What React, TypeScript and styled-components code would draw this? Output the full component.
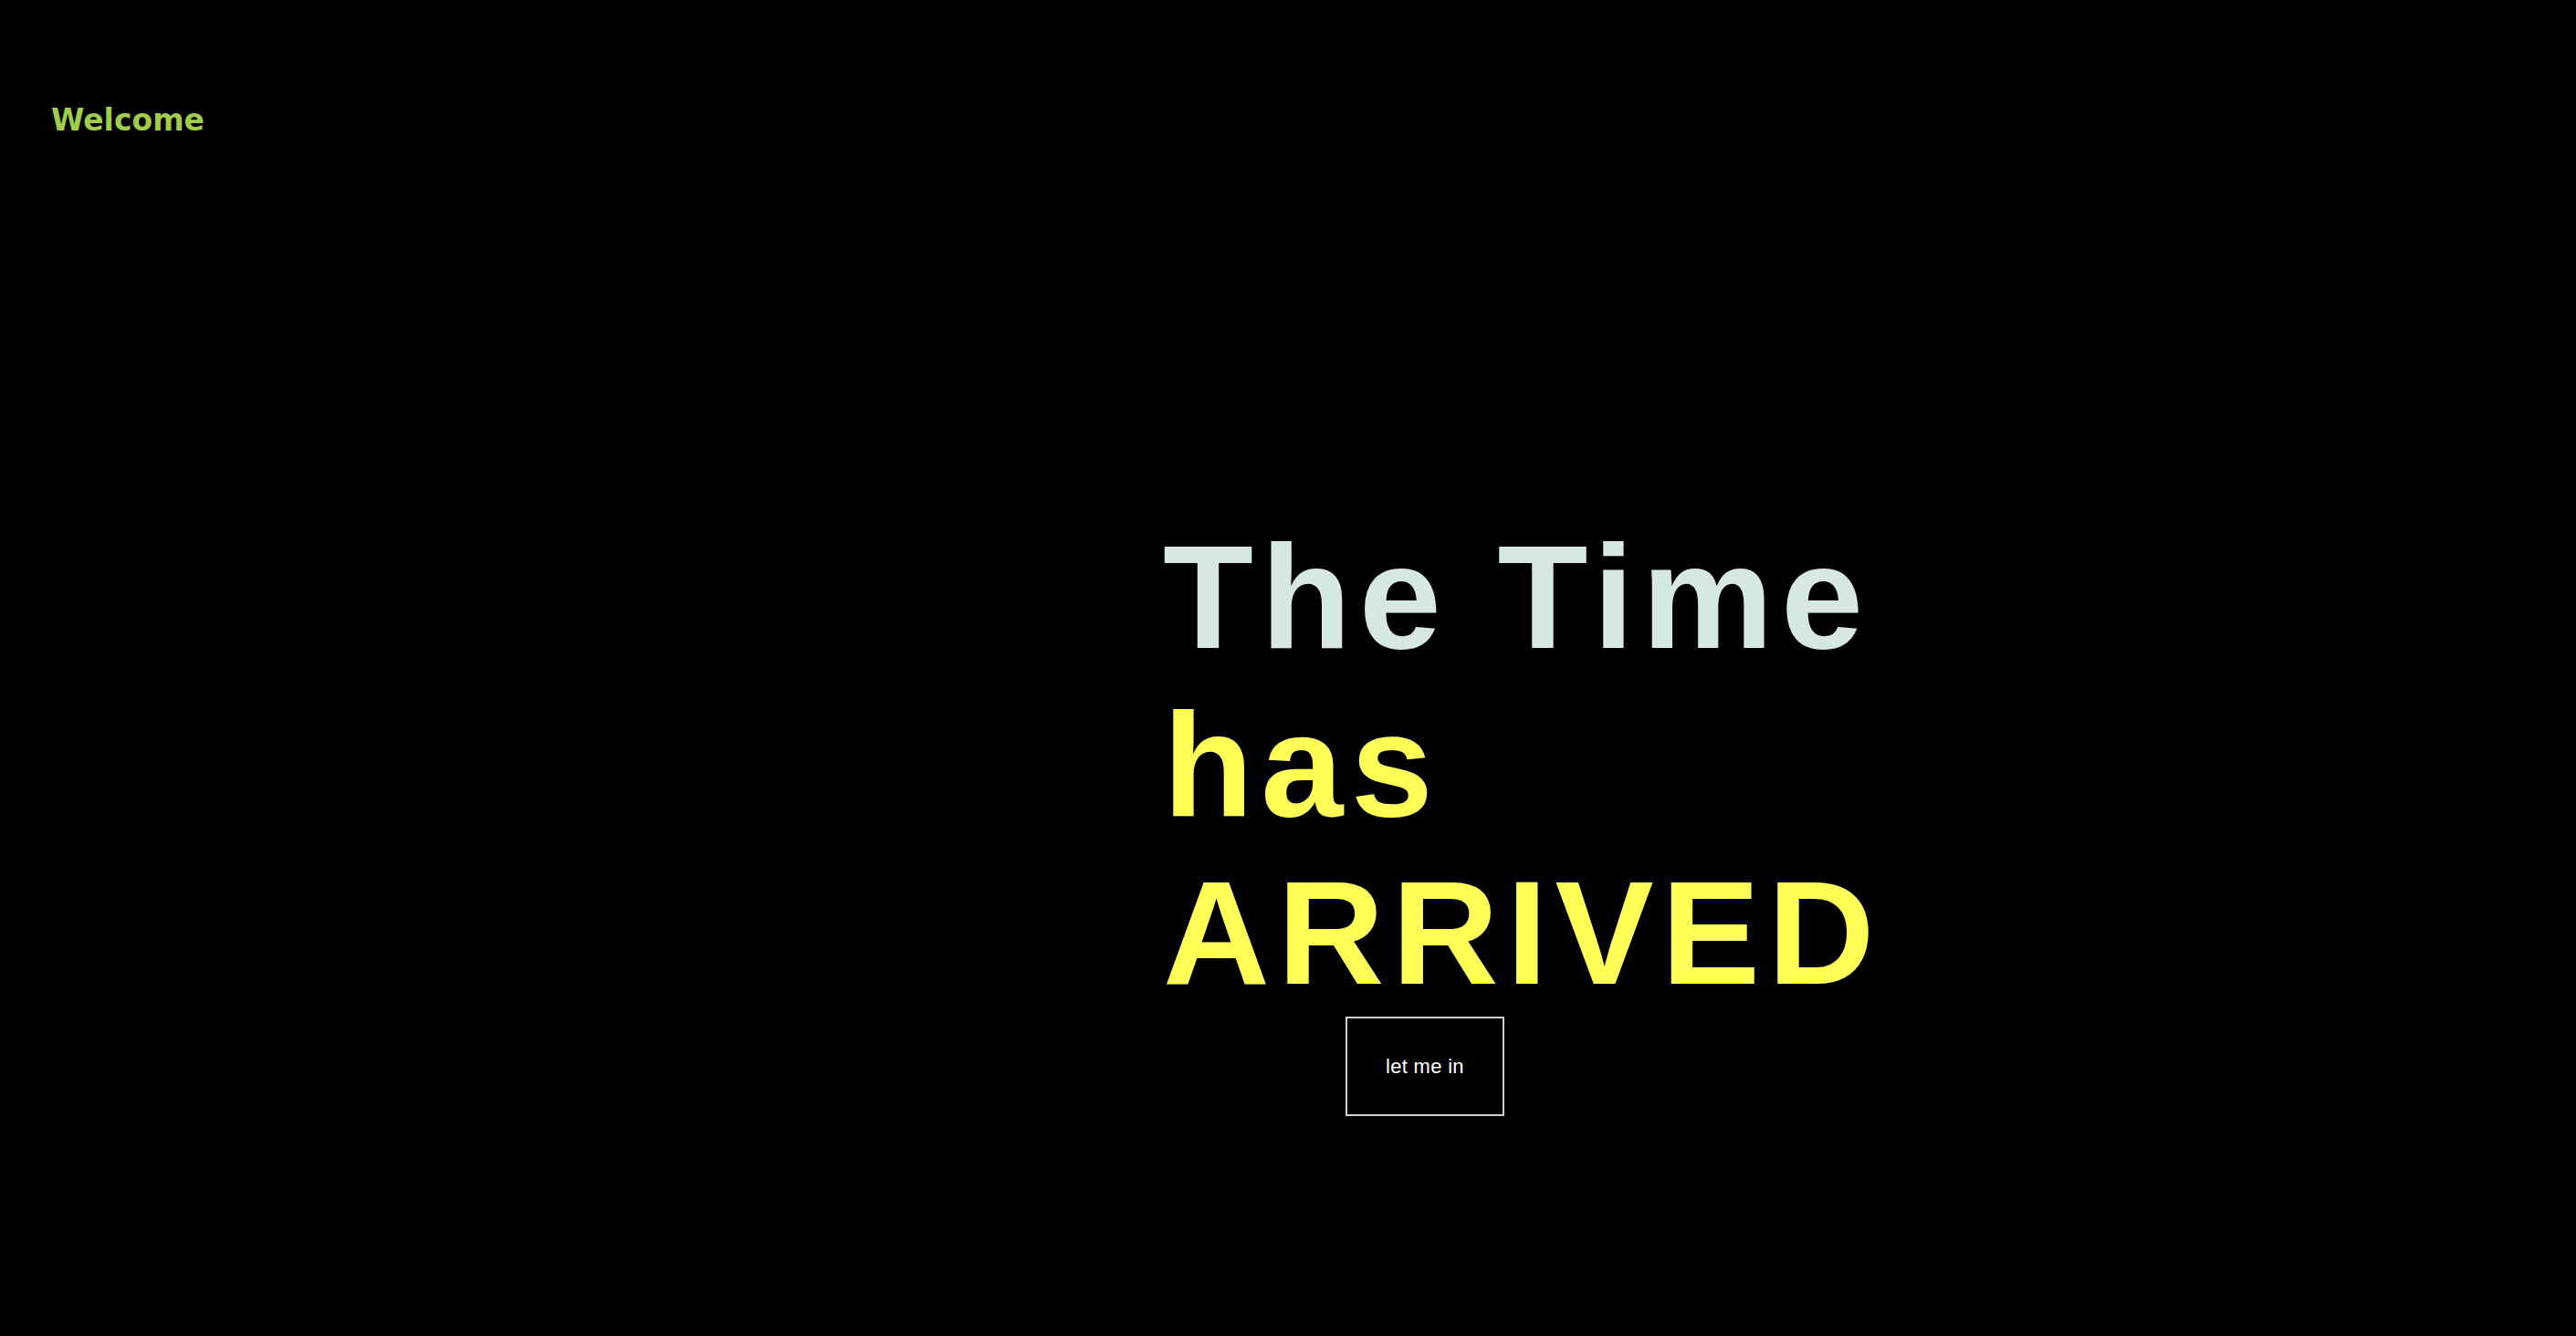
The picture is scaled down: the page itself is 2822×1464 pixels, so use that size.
import React from "react";
import styled, { createGlobalStyle } from "styled-components";

const GlobalStyle = createGlobalStyle`
  html, body {
    margin: 0;
    padding: 0;
    background-color: #000000;
  }
`;

const Page = styled.div`
  min-height: 100vh;
  background-color: #000000;
  display: flex;
  flex-direction: column;
`;

const Header = styled.header`
  padding: 112px 56px 0;
  display: flex;
  align-items: center;
`;

const Logo = styled.span`
  font-family: "DejaVu Sans", "Liberation Sans", sans-serif;
  font-weight: 700;
  font-size: 33px;
  line-height: 40px;
  color: #a1cd4d;
`;

const Hero = styled.section`
  margin-top: 410px;
  margin-left: 1274px;
  display: flex;
  flex-direction: column;
  align-items: flex-start;
`;

const Title = styled.h1`
  margin: 0;
  font-family: "Liberation Sans", Arial, sans-serif;
  font-weight: 700;
  font-size: 162px;
  line-height: 184px;
  letter-spacing: 8.4px;
  white-space: nowrap;
`;

const Line = styled.span<{ $tone: "mint" | "yellow" }>`
  display: block;
  color: ${props => (props.$tone === "mint" ? "#d5e8e3" : "#ffff57")};
`;

const EnterButton = styled.button`
  margin: 0 0 0 200px;
  width: 174px;
  height: 109px;
  background: transparent;
  border: 2px solid #d0d0d0;
  color: #ffffff;
  font-family: "Liberation Sans", Arial, sans-serif;
  font-size: 22px;
  letter-spacing: 0.3px;
  cursor: pointer;
  display: flex;
  align-items: center;
  justify-content: center;
`;

function App() {
  return (
    <>
      <GlobalStyle />
      <Page>
        <Header>
          <Logo>Welcome</Logo>
        </Header>
        <Hero>
          <Title>
            <Line $tone="mint">The Time</Line>
            <Line $tone="yellow">has</Line>
            <Line $tone="yellow">ARRIVED</Line>
          </Title>
          <EnterButton>let me in</EnterButton>
        </Hero>
      </Page>
    </>
  );
}

export default App;
